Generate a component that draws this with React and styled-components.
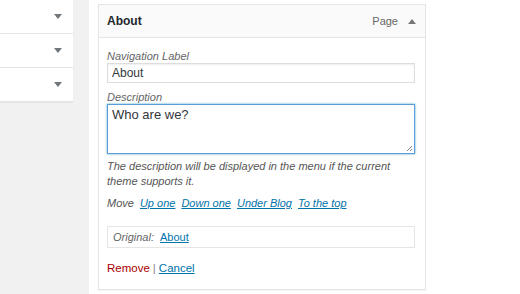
import styled, { createGlobalStyle } from "styled-components";

const Global = createGlobalStyle`
  html, body {
    margin: 0;
    padding: 0;
    background: #fff;
    font-family: "Liberation Sans", Arial, sans-serif;
    color: #444;
  }
`;

const Page = styled.div`
  display: flex;
  height: 294px;
  overflow: hidden;
`;

const Sidebar = styled.div`
  width: 89px;
  flex-shrink: 0;
  background: #f1f1f1;
`;

const SideItem = styled.div`
  width: 73px;
  height: 34px;
  background: #fff;
  border-bottom: 1px solid #e5e5e5;
  box-shadow: 0 1px 1px rgba(0, 0, 0, 0.04);
  display: flex;
  align-items: center;
  justify-content: flex-end;
  padding-right: 11px;
  box-sizing: border-box;
`;

const Arrow = styled.span`
  width: 0;
  height: 0;
  border-left: 4px solid transparent;
  border-right: 4px solid transparent;
  border-${(p) => (p.up ? "bottom" : "top")}: 5px solid ${(p) => p.color || "#72777c"};
`;

const Main = styled.div`
  padding: 4px 0 0 9px;
`;

const Box = styled.div`
  width: 328px;
  height: 286px;
  box-sizing: border-box;
  border: 1px solid #e5e5e5;
  box-shadow: 0 1px 1px rgba(0, 0, 0, 0.04);
  background: #fff;
`;

const Header = styled.div`
  height: 33px;
  box-sizing: border-box;
  background: #fafafa;
  border-bottom: 1px solid #e5e5e5;
  display: flex;
  align-items: center;
  padding: 0 9px 0 8px;
`;

const Title = styled.span`
  font-weight: bold;
  font-size: 12px;
  color: #23282d;
  flex: 1;
`;

const Type = styled.span`
  font-size: 11px;
  color: #666;
  margin-right: 10px;
`;

const Body = styled.div`
  padding: 12px 10px 0 8px;
`;

const Label = styled.div`
  font-size: 11px;
  font-style: italic;
  color: #666;
  margin-bottom: 1px;
`;

const Input = styled.div`
  height: 20px;
  box-sizing: border-box;
  border: 1px solid #ddd;
  box-shadow: inset 0 1px 2px rgba(0, 0, 0, 0.07);
  font-size: 12px;
  color: #32373c;
  padding: 2px 4px;
  margin-bottom: 8px;
`;

const TextArea = styled.div`
  position: relative;
  height: 50px;
  box-sizing: border-box;
  border: 1px solid #5b9dd9;
  box-shadow: 0 0 2px rgba(30, 140, 190, 0.8);
  font-size: 13px;
  color: #32373c;
  padding: 2px 4px;
`;

const Grip = styled.svg`
  position: absolute;
  right: 1px;
  bottom: 1px;
`;

const Help = styled.p`
  font-size: 11px;
  font-style: italic;
  color: #555;
  line-height: 15px;
  margin: 5px 0 8px;
`;

const MoveRow = styled.div`
  display: flex;
  gap: 6px;
  font-size: 11px;
  font-style: italic;
  color: #555;
`;

const Link = styled.a`
  color: ${(p) => p.color || "#0073aa"};
  text-decoration: underline;
  cursor: pointer;
`;

const Original = styled.div`
  margin-top: 17px;
  height: 22px;
  box-sizing: border-box;
  border: 1px solid #e5e5e5;
  display: flex;
  align-items: center;
  gap: 6px;
  padding: 0 5px;
  font-size: 11px;
  font-style: italic;
  color: #666;
  ${Link} {
    font-style: normal;
  }
`;

const Actions = styled.div`
  margin-top: 14px;
  font-size: 11.5px;
  color: #888;
  display: flex;
  gap: 3px;
`;

const RemoveLink = styled.a`
  color: #a00;
  text-decoration: none;
`;

export default function App() {
  return (
    <>
      <Global />
      <Page>
        <Sidebar>
          {[0, 1, 2].map((i) => (
            <SideItem key={i}>
              <Arrow />
            </SideItem>
          ))}
        </Sidebar>
        <Main>
          <Box>
            <Header>
              <Title>About</Title>
              <Type>Page</Type>
              <Arrow up color="#777" />
            </Header>
            <Body>
              <Label>Navigation Label</Label>
              <Input>About</Input>
              <Label>Description</Label>
              <TextArea>
                Who are we?
                <Grip width="7" height="7" viewBox="0 0 7 7">
                  <path d="M6 1L1 6M6 4L4 6" stroke="#888" strokeWidth="1" />
                </Grip>
              </TextArea>
              <Help>
                The description will be displayed in the menu if the current
                <br />
                theme supports it.
              </Help>
              <MoveRow>
                Move
                <Link>Up one</Link>
                <Link>Down one</Link>
                <Link>Under Blog</Link>
                <Link>To the top</Link>
              </MoveRow>
              <Original>
                Original: <Link>About</Link>
              </Original>
              <Actions>
                <RemoveLink>Remove</RemoveLink>|<Link>Cancel</Link>
              </Actions>
            </Body>
          </Box>
        </Main>
      </Page>
    </>
  );
}
